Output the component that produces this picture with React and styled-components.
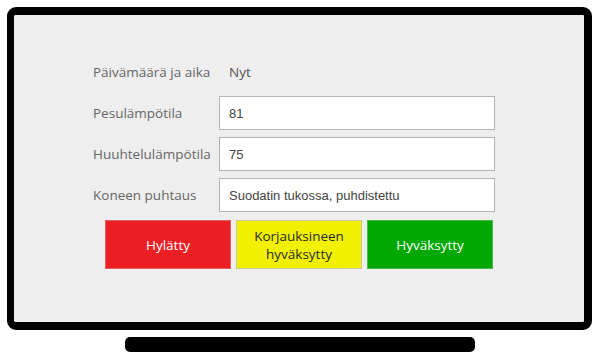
import styled, { createGlobalStyle } from "styled-components";

const GlobalStyle = createGlobalStyle`
  html, body {
    margin: 0;
    padding: 0;
    background: #ffffff;
  }
`;

const fields = [
  { label: "Pesulämpötila", value: "81" },
  { label: "Huuhtelulämpötila", value: "75" },
  { label: "Koneen puhtaus", value: "Suodatin tukossa, puhdistettu" },
];

const buttons = [
  { mode: "reject", text: "Hylätty" },
  { mode: "partial", text: "Korjauksineen hyväksytty" },
  { mode: "accept", text: "Hyväksytty" },
];

export default function App() {
  return (
    <>
      <GlobalStyle />
      <Monitor>
        <Screen>
          <Form>
            <Label>Päivämäärä ja aika</Label>
            <StaticValue>Nyt</StaticValue>
            {fields.map((f) => (
              <Row key={f.label}>
                <Label>{f.label}</Label>
                <Input defaultValue={f.value} />
              </Row>
            ))}
          </Form>
          <ButtonRow>
            {buttons.map((b) => (
              <ActionBtn key={b.mode} $mode={b.mode}>
                {b.text}
              </ActionBtn>
            ))}
          </ButtonRow>
        </Screen>
        <Stand />
      </Monitor>
    </>
  );
}

const Monitor = styled.div`
  width: 600px;
  height: 362px;
  padding: 7px 8px 0 7px;
  box-sizing: border-box;
  display: flex;
  flex-direction: column;
  align-items: center;
`;

const Screen = styled.div`
  width: 585px;
  height: 323px;
  box-sizing: border-box;
  border: 8px solid #000;
  border-left-width: 7px;
  border-radius: 9px;
  background: #eeeeee;
  padding: 40px 0 0 79px;
  display: flex;
  flex-direction: column;
`;

const Form = styled.div`
  display: grid;
  grid-template-columns: 126px 276px;
  grid-auto-rows: 34px;
  row-gap: 7px;
  align-items: center;
`;

const Row = styled.div`
  display: contents;
`;

const Label = styled.div`
  font-family: "Open Sans", sans-serif;
  font-size: 13.5px;
  color: #666666;
  white-space: nowrap;
`;

const StaticValue = styled.div`
  font-family: "Open Sans", sans-serif;
  font-size: 13.5px;
  color: #555555;
  padding-left: 10px;
`;

const Input = styled.input`
  height: 34px;
  width: 100%;
  box-sizing: border-box;
  border: 1px solid #b4b4b4;
  background: #ffffff;
  padding: 0 9px;
  font-family: "Liberation Sans", Arial, sans-serif;
  font-size: 13px;
  color: #444444;
  outline: none;
`;

const ButtonRow = styled.div`
  display: flex;
  gap: 5px;
  margin: 8px 0 0 12px;
`;

const modeStyles = {
  reject: { bg: "#ec2024", border: "#e06060", color: "#ffffff" },
  partial: { bg: "#f0f000", border: "#c8c896", color: "#2a2a2a" },
  accept: { bg: "#00a800", border: "#4cba4c", color: "#ffffff" },
};

const ActionBtn = styled.div`
  width: 126px;
  height: 49px;
  box-sizing: border-box;
  display: flex;
  align-items: center;
  justify-content: center;
  text-align: center;
  padding: 0 14px;
  font-family: "Open Sans", sans-serif;
  font-size: 13.5px;
  line-height: 18px;
  background: ${({ $mode }) => modeStyles[$mode].bg};
  border: 1px solid ${({ $mode }) => modeStyles[$mode].border};
  color: ${({ $mode }) => modeStyles[$mode].color};
`;

const Stand = styled.div`
  margin-top: 7px;
  width: 350px;
  height: 15px;
  background: #000;
  border-radius: 5px;
`;
